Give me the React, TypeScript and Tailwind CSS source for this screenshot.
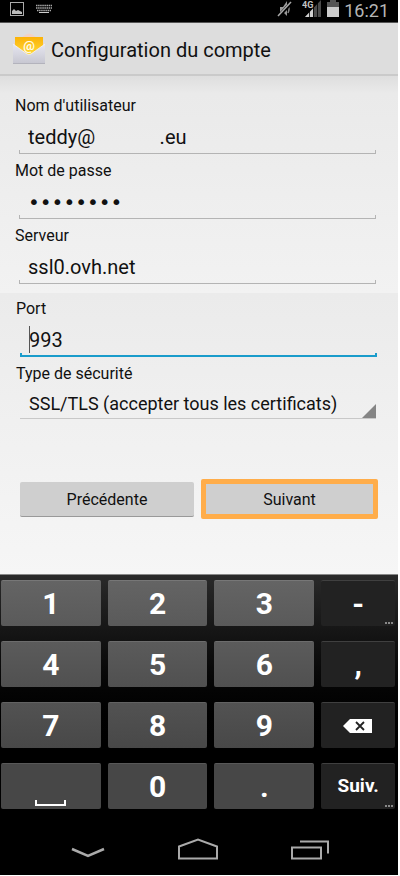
import type { ReactNode } from 'react';

type FieldProps = {
  id: string;
  label: string;
  value: string;
  type?: string;
  active?: boolean;
};

function Field({ id, label, value, type = 'text', active = false }: FieldProps) {
  const line = active ? 'border-x-2 border-b-2 border-[#1a9ccb]' : 'border-x border-b border-[#b4b4b4]';
  const face = type === 'password' ? "font-['DejaVu_Sans',sans-serif] text-[20px]" : 'text-[20px]';
  return (
    <div className="flex flex-col">
      <label htmlFor={id} className="h-[22px] text-[16px] leading-6">
        {label}
      </label>
      <div className="relative ml-1 mr-[5px] h-[38px]">
        <input
          id={id}
          type={type}
          defaultValue={value}
          className={`h-9 w-full bg-transparent px-[9px] pt-[6px] leading-7 outline-none ${face}`}
        />
        {active && <span className="absolute left-[9px] top-[7px] h-[27px] w-px bg-[#555]" />}
        <span className={`pointer-events-none absolute inset-x-0 bottom-0 h-1 ${line}`} />
      </div>
    </div>
  );
}

function StatusBar() {
  return (
    <div className="flex h-[22px] items-start bg-black pl-[10px] pr-2 text-[#b5b5b5]">
      <svg width="14" height="14" viewBox="0 0 14 14" className="mt-[2px]" aria-hidden="true">
        <rect x=".5" y=".5" width="13" height="13" fill="none" stroke="#aaa" />
        <path d="M2 12V9l2-2 2 2 2-1 2 1 2 1v2z" fill="#bbb" />
      </svg>
      <svg width="16" height="10" viewBox="0 0 16 10" className="ml-3 mt-1" aria-hidden="true">
        <path d="M0 1.5h16M0 4h16M1 6.500h14" stroke="#aaa" strokeWidth="1.500" strokeDasharray="1.500 .6" />
        <path d="M3 8.500h10" stroke="#ccc" />
      </svg>
      <div className="ml-auto flex items-start">
        <svg width="16" height="18" viewBox="0 0 16 18" className="mr-[9px]" aria-hidden="true">
          <path d="M3 7h3l4-6v15l-4-4H3z" fill="#999" />
          <path d="M11 4q2 5 0 9" stroke="#888" strokeWidth="1.500" fill="none" />
          <path d="M1 17L15 2" stroke="#000" strokeWidth="3.500" />
          <path d="M1 16L14 2" stroke="#aaa" strokeWidth="1.500" />
        </svg>
        <svg width="20" height="18" viewBox="0 0 20 18" className="mr-[5px]" aria-hidden="true">
          <path d="M3 17L19 0v17z" fill="#4b4b4b" />
          <path d="M3 17l8-8.500V17z" fill="#d0d0d0" />
          <path d="M7.500 9v8M11.500 5v12M15.500 3v14" stroke="#000" strokeWidth=".8" />
          <rect width="11" height="8" fill="#000" />
          <text x="0" y="8" fill="#c4c4c4" fontFamily="Roboto, sans-serif" fontWeight="700" fontSize="9">
            4G
          </text>
        </svg>
        <svg width="12" height="18" viewBox="0 0 12 18" className="mr-[5px]" aria-hidden="true">
          <path d="M0 2h3V0h6v2h3v5H0z" fill="#555" />
          <path d="M0 7h12v10H0z" fill="#ccc" />
        </svg>
        <time className="pr-px text-[18px] leading-[21px]">16:21</time>
      </div>
    </div>
  );
}

function MailIcon() {
  return (
    <svg width="34" height="32" viewBox="0 0 34 32" aria-hidden="true">
      <defs>
        <linearGradient id="flap" x1="0" y1="0" x2="0" y2="1">
          <stop offset="0" stopColor="#fbb206" />
          <stop offset="1" stopColor="#ffd93a" />
        </linearGradient>
        <linearGradient id="paper" x1="0" y1="0" x2="0" y2="1">
          <stop offset="0" stopColor="#e6e6f0" />
          <stop offset="1" stopColor="#c6c6d0" />
        </linearGradient>
      </defs>
      <path d="M1 11L13 2q4-3 8 0l12 9z" fill="#f0d2c6" />
      <path d="M3 4h28v18H3z" fill="url(#flap)" />
      <text x="17" y="17" textAnchor="middle" fill="#fffbe8" fontFamily="Roboto, sans-serif" fontWeight="700" fontSize="13">
        @
      </text>
      <path d="M1 11l14 10q2 1 4 0l14-10v20H1z" fill="url(#paper)" />
      <path d="M1 11l14 10q2 1 4 0l14-10" fill="none" stroke="#f4f4fa" strokeWidth=".8" />
      <path d="M1 30.500h32" stroke="#b3b3bc" />
    </svg>
  );
}

function Key({ children, label, shade, more = false }: { children: ReactNode; label: string; shade: string; more?: boolean }) {
  return (
    <button
      type="button"
      aria-label={label}
      className={`relative flex h-[46px] items-center justify-center rounded-[2px] border-t font-bold text-white ${shade}`}
    >
      {children}
      {more && (
        <span className="absolute bottom-[2px] right-[2px] flex gap-px">
          <i className="size-[2px] bg-[#888]" />
          <i className="size-[2px] bg-[#888]" />
          <i className="size-[2px] bg-[#888]" />
        </span>
      )}
    </button>
  );
}

const rows = [
  { digits: ['1', '2', '3'], shade: 'border-[#777] bg-linear-to-b from-[#646464] to-[#5a5a5a] text-[30px]' },
  { digits: ['4', '5', '6'], shade: 'border-[#6c6c6c] bg-linear-to-b from-[#5b5b5b] to-[#505050] text-[30px]' },
  { digits: ['7', '8', '9'], shade: 'border-[#626262] bg-linear-to-b from-[#525252] to-[#484848] text-[30px]' },
  { digits: [' ', '0', '.'], shade: 'border-[#585858] bg-[#474747] text-[30px]' },
];

const dark = 'border-[#404040] bg-[#222]';

const sideKeys = [
  <Key key="minus" label="-" shade={`${dark} text-[30px]`} more>-</Key>,
  <Key key="comma" label="," shade={`${dark} text-[30px]`}>,</Key>,
  <Key key="erase" label="Effacer" shade={dark}>
    <svg width="30" height="16" viewBox="0 0 30 16" aria-hidden="true">
      <path d="M0 8l7-7h22v14H7z" fill="#fff" />
      <path d="M13 4l8 8M21 4l-8 8" stroke="#222" strokeWidth="1.800" />
    </svg>
  </Key>,
  <Key key="next" label="Suiv." shade={`${dark} text-[19px]`} more>Suiv.</Key>,
];

function Keyboard() {
  return (
    <div className="grid grid-cols-[100fr_100fr_100fr_74fr] gap-x-[7px] gap-y-[15px] border-t border-[#888] bg-linear-to-b from-[#2a2a2a] to-black to-75% pb-[11px] pl-px pr-[3px] pt-[5px]">
      {rows.map((row, r) => [
        ...row.digits.map((d) => (
          <Key key={d} label={d === ' ' ? 'Espace' : d} shade={row.shade}>
            {d === ' ' ? <span className="mt-8 h-[6px] w-[31px] border-2 border-t-0 border-white" /> : d}
          </Key>
        )),
        sideKeys[r],
      ])}
    </div>
  );
}

function NavBar() {
  return (
    <nav className="flex h-[55px] items-start justify-between bg-black pl-[71px] pr-[69px] pt-[18px] text-[#aaa]">
      <button type="button" aria-label="Retour">
        <svg width="34" height="24" viewBox="0 0 34 24" fill="none" stroke="currentColor" strokeWidth="2.500">
          <path d="M1 11l16 7 16-7" />
        </svg>
      </button>
      <button type="button" aria-label="Accueil">
        <svg width="40" height="24" viewBox="0 0 40 24" fill="none" stroke="currentColor" strokeWidth="2">
          <path d="M1 20.500V8.500l19-7 19 7v12z" />
        </svg>
      </button>
      <button type="button" aria-label="Applications récentes">
        <svg width="38" height="24" viewBox="0 0 38 24" fill="none" stroke="currentColor" strokeWidth="2">
          <path d="M1 9.500h29v11H1zM9 3.500h28v12" />
        </svg>
      </button>
    </nav>
  );
}

export default function App() {
  return (
    <div className="bg-white pb-px pr-[2px] font-['Roboto',sans-serif] text-[#111]">
      <StatusBar />
      <header className="flex h-[54px] items-center gap-[5px] border-b-2 border-t border-b-[#cacaca] border-t-[#555] bg-[#ddd] pl-[12px]">
        <MailIcon />
        <h1 className="pt-[2px] text-[20px] leading-7">Configuration du compte</h1>
      </header>
      <form>
        <div className="flex flex-col gap-[5px] bg-linear-to-b from-[#dedede] via-[#eaeaea] via-8% to-[#f2f2f2] pb-[9px] pl-[15px] pr-[17px] pt-[18px]">
          <Field id="user" label="Nom d'utilisateur" value={'teddy@' + ' '.repeat(13) + '.eu'} />
          <Field id="pass" label="Mot de passe" type="password" value="password" />
          <Field id="server" label="Serveur" value="ssl0.ovh.net" />
        </div>
        <div className="bg-linear-to-b from-[#ebebeb] to-[#f6f6f6] pb-[55px] pl-4 pr-4 pt-1">
          <div className="flex flex-col gap-[5px]">
            <Field id="port" label="Port" value="993" active />
            <div className="flex flex-col">
              <label htmlFor="security" className="h-[22px] text-[16px] leading-6">
                Type de sécurité
              </label>
              <div className="relative ml-1 mr-[6px] h-[35px] border-b border-[#c8c8c8]">
                <select id="security" className="h-full w-full appearance-none bg-transparent px-[9px] pt-1 text-[18px] outline-none">
                  <option>SSL/TLS (accepter tous les certificats)</option>
                </select>
                <svg width="14" height="14" viewBox="0 0 14 14" className="pointer-events-none absolute bottom-0 right-0" aria-hidden="true">
                  <path d="M14 0v14H0z" fill="#858585" />
                </svg>
              </div>
            </div>
          </div>
          <div className="mt-[60px] grid grid-cols-[174fr_177fr] items-center gap-[7px] pl-1 pr-1 text-[16px]">
            <button type="button" className="h-[35px] rounded-[2px] border-b border-[#999] bg-[#cfcfcf] pt-[2px]">
              Précédente
            </button>
            <button type="button" className="h-10 rounded-[2px] border-5 border-[#ffad4a] bg-[#cfcfcf] pt-px">
              Suivant
            </button>
          </div>
        </div>
      </form>
      <Keyboard />
      <NavBar />
    </div>
  );
}
